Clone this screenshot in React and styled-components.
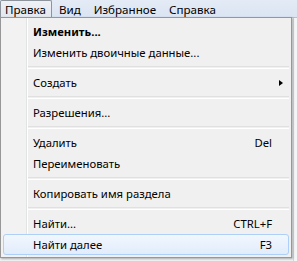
import React from "react";
import styled, { createGlobalStyle } from "styled-components";

const GlobalStyle = createGlobalStyle`
  html, body {
    margin: 0;
    padding: 0;
    background: #f3f4f6;
  }
  body {
    font-family: "Noto Sans", "Open Sans", "DejaVu Sans", sans-serif;
    font-size: 11.3px;
    color: #000;
  }
`;

const Screen = styled.div`
  width: 297px;
  height: 261px;
  overflow: hidden;
  display: flex;
  flex-direction: column;
`;

const MenuBar = styled.div`
  height: 18px;
  display: flex;
  align-items: stretch;
  gap: 2px;
  font-size: 11.6px;
  background: linear-gradient(#e4ebf6, #dbe4f2);
  border-bottom: 1px solid #b9c0ca;
  box-sizing: border-box;
`;

const BarItem = styled.div`
  display: flex;
  align-items: center;
  padding: 0 5px 0 4px;
  border: 1px solid ${(p) => (p.open ? "#8e949b" : "transparent")};
  border-bottom: 0;
  border-radius: 2px 2px 0 0;
  background: ${(p) =>
    p.open ? "linear-gradient(#eef1f6, #e3e8ef)" : "transparent"};
`;

const Workspace = styled.div`
  flex: 1;
  display: flex;
  align-items: flex-start;
  background: linear-gradient(to right, #f2f3f5 0 293px, #d4d8de 293px 294px, #f4f5f7 294px);
`;

const Menu = styled.div`
  width: 292px;
  box-sizing: border-box;
  margin-top: -1px;
  padding: 3px 2px 2px;
  border: 1px solid #979797;
  background: linear-gradient(
    to right,
    #f2f2f2 0 25px,
    #e2e3e3 25px 26px,
    #ffffff 26px 27px,
    #f0f0f0 27px
  );
  box-shadow: 1px 1px 2px rgba(0, 0, 0, 0.3);
`;

const Item = styled.div`
  height: 21px;
  display: grid;
  grid-template-columns: 1fr auto 16px;
  align-items: center;
  padding-left: 29px;
  box-sizing: border-box;
  border: 1px solid ${(p) => (p.active ? "#aecff7" : "transparent")};
  border-radius: 3px;
  background: ${(p) =>
    p.active ? "linear-gradient(#f2f7fe, #e1ecfb)" : "transparent"};
  font-weight: ${(p) => (p.bold ? 700 : 400)};
  white-space: nowrap;
`;

const Label = styled.span``;

const Shortcut = styled.span`
  text-align: right;
`;

const Arrow = styled.span`
  justify-self: start;
  margin-left: 7px;
  width: 0;
  height: 0;
  border-top: 3.5px solid transparent;
  border-bottom: 3.5px solid transparent;
  border-left: 4px solid #000;
`;

const Separator = styled.div`
  height: 9px;
  display: flex;
  align-items: center;
  padding-left: 25px;

  &::after {
    content: "";
    flex: 1;
    height: 1px;
    border-top: 1px solid #e0e0e0;
    border-bottom: 1px solid #ffffff;
  }
`;

const entries = [
  { label: "Изменить...", bold: true },
  { label: "Изменить двоичные данные..." },
  { sep: true },
  { label: "Создать", sub: true },
  { sep: true },
  { label: "Разрешения..." },
  { sep: true },
  { label: "Удалить", key: "Del" },
  { label: "Переименовать" },
  { sep: true },
  { label: "Копировать имя раздела" },
  { sep: true },
  { label: "Найти...", key: "CTRL+F" },
  { label: "Найти далее", key: "F3", active: true },
];

export default function App() {
  return (
    <Screen>
      <GlobalStyle />
      <MenuBar>
        <BarItem open>Правка</BarItem>
        <BarItem>Вид</BarItem>
        <BarItem>Избранное</BarItem>
        <BarItem>Справка</BarItem>
      </MenuBar>
      <Workspace>
        <Menu>
          {entries.map((e, i) =>
            e.sep ? (
              <Separator key={i} />
            ) : (
              <Item key={i} bold={e.bold} active={e.active}>
                <Label>{e.label}</Label>
                <Shortcut>{e.key}</Shortcut>
                {e.sub ? <Arrow /> : <span />}
              </Item>
            )
          )}
        </Menu>
      </Workspace>
    </Screen>
  );
}
